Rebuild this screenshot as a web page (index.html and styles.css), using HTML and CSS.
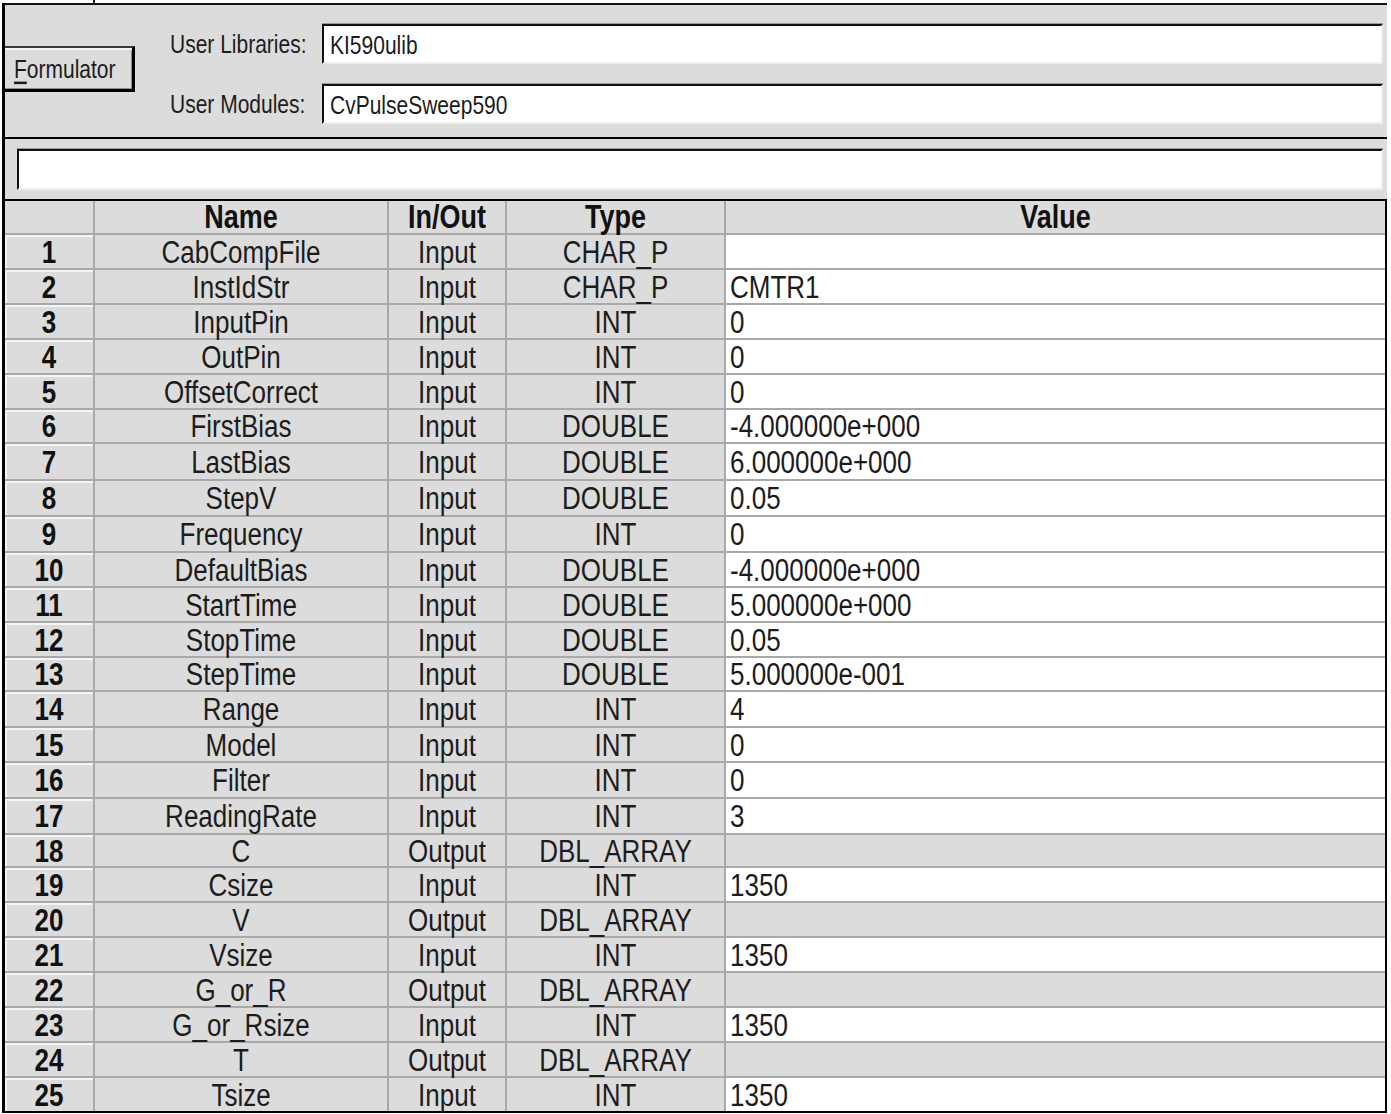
FILE: index.html
```html
<!DOCTYPE html>
<html>
<head>
<meta charset="utf-8">
<title>Formulator</title>
<link rel="stylesheet" href="styles.css">
</head>
<body>
<div class="window">
  <div class="toolbar">
    <button class="btn"><span class="t"><u>F</u>ormulator</span></button>
    <div class="fields">
      <div class="lbl"><span class="t">User Libraries:</span></div>
      <div class="field"><span class="t">KI590ulib</span></div>
      <div class="lbl"><span class="t">User Modules:</span></div>
      <div class="field"><span class="t">CvPulseSweep590</span></div>
    </div>
  </div>
  <div class="cmdbar"><div class="cmd"></div></div>
  <div class="grid">
    <div class="row head">
      <div class="c num"></div>
      <div class="c"><span class="t">Name</span></div>
      <div class="c"><span class="t">In/Out</span></div>
      <div class="c"><span class="t">Type</span></div>
      <div class="c val"><span class="t">Value</span></div>
    </div>
    <div class="row"><div class="c num"><span class="t">1</span></div><div class="c"><span class="t">CabCompFile</span></div><div class="c"><span class="t">Input</span></div><div class="c"><span class="t">CHAR_P</span></div><div class="c val"></div></div>
    <div class="row"><div class="c num"><span class="t">2</span></div><div class="c"><span class="t">InstIdStr</span></div><div class="c"><span class="t">Input</span></div><div class="c"><span class="t">CHAR_P</span></div><div class="c val"><span class="t">CMTR1</span></div></div>
    <div class="row"><div class="c num"><span class="t">3</span></div><div class="c"><span class="t">InputPin</span></div><div class="c"><span class="t">Input</span></div><div class="c"><span class="t">INT</span></div><div class="c val"><span class="t">0</span></div></div>
    <div class="row"><div class="c num"><span class="t">4</span></div><div class="c"><span class="t">OutPin</span></div><div class="c"><span class="t">Input</span></div><div class="c"><span class="t">INT</span></div><div class="c val"><span class="t">0</span></div></div>
    <div class="row"><div class="c num"><span class="t">5</span></div><div class="c"><span class="t">OffsetCorrect</span></div><div class="c"><span class="t">Input</span></div><div class="c"><span class="t">INT</span></div><div class="c val"><span class="t">0</span></div></div>
    <div class="row h34"><div class="c num"><span class="t">6</span></div><div class="c"><span class="t">FirstBias</span></div><div class="c"><span class="t">Input</span></div><div class="c"><span class="t">DOUBLE</span></div><div class="c val"><span class="t">-4.000000e+000</span></div></div>
    <div class="row h37"><div class="c num"><span class="t">7</span></div><div class="c"><span class="t">LastBias</span></div><div class="c"><span class="t">Input</span></div><div class="c"><span class="t">DOUBLE</span></div><div class="c val"><span class="t">6.000000e+000</span></div></div>
    <div class="row h36"><div class="c num"><span class="t">8</span></div><div class="c"><span class="t">StepV</span></div><div class="c"><span class="t">Input</span></div><div class="c"><span class="t">DOUBLE</span></div><div class="c val"><span class="t">0.05</span></div></div>
    <div class="row h36"><div class="c num"><span class="t">9</span></div><div class="c"><span class="t">Frequency</span></div><div class="c"><span class="t">Input</span></div><div class="c"><span class="t">INT</span></div><div class="c val"><span class="t">0</span></div></div>
    <div class="row"><div class="c num"><span class="t">10</span></div><div class="c"><span class="t">DefaultBias</span></div><div class="c"><span class="t">Input</span></div><div class="c"><span class="t">DOUBLE</span></div><div class="c val"><span class="t">-4.000000e+000</span></div></div>
    <div class="row"><div class="c num"><span class="t">11</span></div><div class="c"><span class="t">StartTime</span></div><div class="c"><span class="t">Input</span></div><div class="c"><span class="t">DOUBLE</span></div><div class="c val"><span class="t">5.000000e+000</span></div></div>
    <div class="row"><div class="c num"><span class="t">12</span></div><div class="c"><span class="t">StopTime</span></div><div class="c"><span class="t">Input</span></div><div class="c"><span class="t">DOUBLE</span></div><div class="c val"><span class="t">0.05</span></div></div>
    <div class="row h34"><div class="c num"><span class="t">13</span></div><div class="c"><span class="t">StepTime</span></div><div class="c"><span class="t">Input</span></div><div class="c"><span class="t">DOUBLE</span></div><div class="c val"><span class="t">5.000000e-001</span></div></div>
    <div class="row h36"><div class="c num"><span class="t">14</span></div><div class="c"><span class="t">Range</span></div><div class="c"><span class="t">Input</span></div><div class="c"><span class="t">INT</span></div><div class="c val"><span class="t">4</span></div></div>
    <div class="row"><div class="c num"><span class="t">15</span></div><div class="c"><span class="t">Model</span></div><div class="c"><span class="t">Input</span></div><div class="c"><span class="t">INT</span></div><div class="c val"><span class="t">0</span></div></div>
    <div class="row h36"><div class="c num"><span class="t">16</span></div><div class="c"><span class="t">Filter</span></div><div class="c"><span class="t">Input</span></div><div class="c"><span class="t">INT</span></div><div class="c val"><span class="t">0</span></div></div>
    <div class="row h36"><div class="c num"><span class="t">17</span></div><div class="c"><span class="t">ReadingRate</span></div><div class="c"><span class="t">Input</span></div><div class="c"><span class="t">INT</span></div><div class="c val"><span class="t">3</span></div></div>
    <div class="row h33"><div class="c num"><span class="t">18</span></div><div class="c"><span class="t">C</span></div><div class="c"><span class="t">Output</span></div><div class="c"><span class="t">DBL_ARRAY</span></div><div class="c val out"></div></div>
    <div class="row"><div class="c num"><span class="t">19</span></div><div class="c"><span class="t">Csize</span></div><div class="c"><span class="t">Input</span></div><div class="c"><span class="t">INT</span></div><div class="c val"><span class="t">1350</span></div></div>
    <div class="row"><div class="c num"><span class="t">20</span></div><div class="c"><span class="t">V</span></div><div class="c"><span class="t">Output</span></div><div class="c"><span class="t">DBL_ARRAY</span></div><div class="c val out"></div></div>
    <div class="row"><div class="c num"><span class="t">21</span></div><div class="c"><span class="t">Vsize</span></div><div class="c"><span class="t">Input</span></div><div class="c"><span class="t">INT</span></div><div class="c val"><span class="t">1350</span></div></div>
    <div class="row"><div class="c num"><span class="t">22</span></div><div class="c"><span class="t">G_or_R</span></div><div class="c"><span class="t">Output</span></div><div class="c"><span class="t">DBL_ARRAY</span></div><div class="c val out"></div></div>
    <div class="row"><div class="c num"><span class="t">23</span></div><div class="c"><span class="t">G_or_Rsize</span></div><div class="c"><span class="t">Input</span></div><div class="c"><span class="t">INT</span></div><div class="c val"><span class="t">1350</span></div></div>
    <div class="row"><div class="c num"><span class="t">24</span></div><div class="c"><span class="t">T</span></div><div class="c"><span class="t">Output</span></div><div class="c"><span class="t">DBL_ARRAY</span></div><div class="c val out"></div></div>
    <div class="row last"><div class="c num"><span class="t">25</span></div><div class="c"><span class="t">Tsize</span></div><div class="c"><span class="t">Input</span></div><div class="c"><span class="t">INT</span></div><div class="c val"><span class="t">1350</span></div></div>
  </div>
</div>
</body>
</html>
```

FILE: styles.css
```css
* { box-sizing: border-box; }
html, body { margin: 0; padding: 0; background: #fff; }
body {
  font-family: "Liberation Sans", Arial, sans-serif;
  color: #1c1c1c;
}
.t {
  display: inline-block;
  line-height: 1;
  transform: scaleY(1.2);
  white-space: pre;
}
.window {
  position: relative;
  margin: 3px 0 0 2px;
  width: 1385px;
  border-left: 3px solid #000;
  border-top: 2px solid #111;
  background: #dcdcdc;
}
.window::before {
  content: "";
  position: absolute;
  top: -5px;
  left: 88px;
  width: 2px;
  height: 4px;
  background: #222;
}
.toolbar {
  display: flex;
  height: 134px;
  border-bottom: 2px solid #000;
}
.btn {
  margin-top: 41px;
  width: 130px;
  height: 46px;
  padding: 0 0 0 9px;
  text-align: left;
  font-family: inherit;
  font-size: 21px;
  color: #1c1c1c;
  background: #dcdcdc;
  border: 0;
  border-top: 2px solid #3a3a3a;
  border-right: 3px solid #000;
  border-bottom: 3px solid #000;
  box-shadow: inset 0 2px 0 #f4f4f4, inset -1px -1px 0 #8c8c8c;
}
.btn .t { transform: scaleY(1.25); }
.btn u { text-decoration-thickness: 2px; text-underline-offset: 3px; }
.fields {
  flex: 1;
  margin: 0 4px 0 35px;
  padding-top: 19px;
  display: grid;
  grid-template-columns: 152px 1fr;
  grid-auto-rows: 40px;
  row-gap: 20px;
  align-items: center;
}
.lbl { font-size: 21px; }
.lbl .t, .field .t { transform: scaleY(1.25); }
.field {
  height: 40px;
  display: flex;
  align-items: center;
  padding-left: 6px;
  font-size: 21px;
  background: #fff;
  border-top: 2px solid #111;
  border-left: 2px solid #111;
  border-bottom: 2px solid #eeeeee;
  border-right: 2px solid #eeeeee;
  box-shadow: 0 -1px 0 #9a9a9a;
}
.cmdbar {
  padding: 10px 4px 9px 12px;
}
.cmd {
  height: 41px;
  background: #fff;
  border-top: 2px solid #111;
  border-left: 2px solid #111;
  border-bottom: 2px solid #eeeeee;
  border-right: 2px solid #eeeeee;
  box-shadow: 0 -1px 0 #9a9a9a;
}
.grid {
  border-top: 2px solid #000;
  border-right: 2px solid #000;
  border-bottom: 2px solid #000;
  background: #fff;
}
.row {
  display: grid;
  grid-template-columns: 90px 294px 118px 219px 1fr;
  height: 35px;
  font-size: 26px;
}
.row.head { height: 34px; font-size: 27px; font-weight: bold; color: #111; }
.row.h33 { height: 33px; }
.row.h34 { height: 34px; }
.row.h36 { height: 36px; }
.row.h37 { height: 37px; }
.row.last { height: 33px; }
.c {
  display: flex;
  align-items: center;
  justify-content: center;
  background: #dcdcdc;
  border-right: 2px solid #a9a9a9;
  border-bottom: 2px solid #a9a9a9;
}
.row.last .c { border-bottom: 0; }
.num {
  font-weight: bold;
  color: #111;
  box-shadow: inset 2px 2px 0 #f4f4f4;
}
.row.head .num { box-shadow: none; }
.val {
  justify-content: flex-start;
  padding-left: 4px;
  background: #fff;
  border-right: 0;
}
.row.head .val { justify-content: center; background: #dcdcdc; padding-left: 0; }
.val.out { background: #dcdcdc; }
```
